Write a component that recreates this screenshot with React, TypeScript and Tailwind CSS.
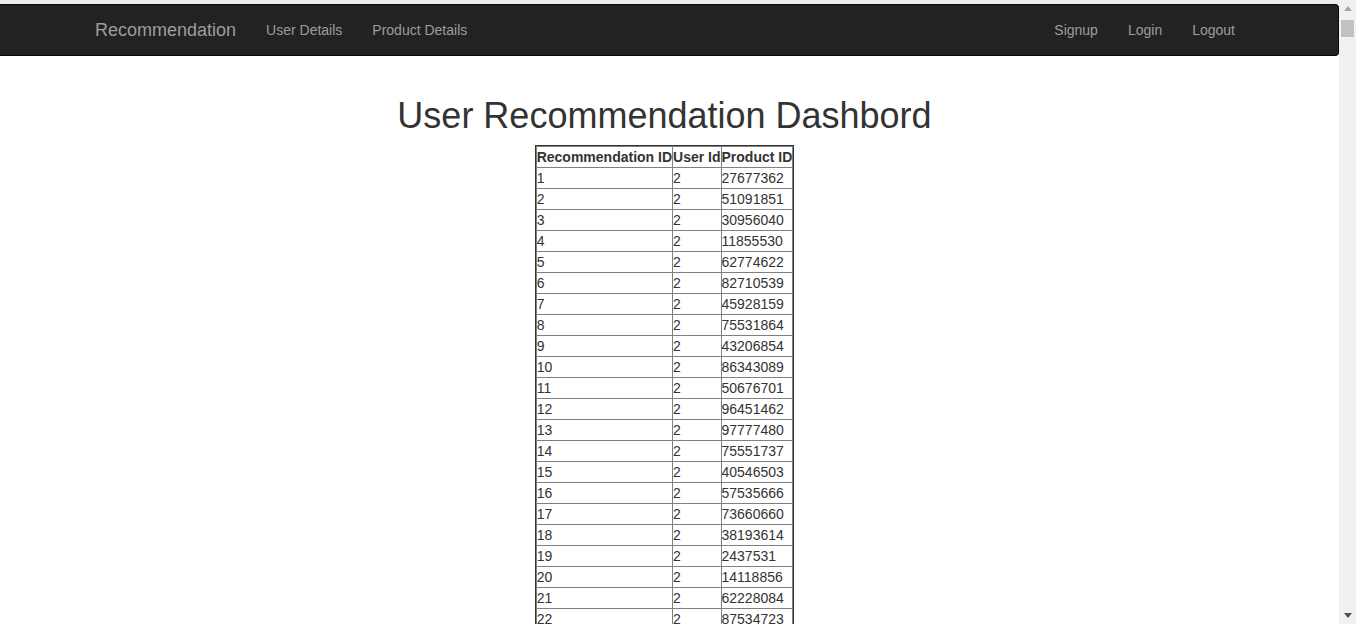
const recommendations = [
  { id: 1, userId: 2, productId: 27677362 },
  { id: 2, userId: 2, productId: 51091851 },
  { id: 3, userId: 2, productId: 30956040 },
  { id: 4, userId: 2, productId: 11855530 },
  { id: 5, userId: 2, productId: 62774622 },
  { id: 6, userId: 2, productId: 82710539 },
  { id: 7, userId: 2, productId: 45928159 },
  { id: 8, userId: 2, productId: 75531864 },
  { id: 9, userId: 2, productId: 43206854 },
  { id: 10, userId: 2, productId: 86343089 },
  { id: 11, userId: 2, productId: 50676701 },
  { id: 12, userId: 2, productId: 96451462 },
  { id: 13, userId: 2, productId: 97777480 },
  { id: 14, userId: 2, productId: 75551737 },
  { id: 15, userId: 2, productId: 40546503 },
  { id: 16, userId: 2, productId: 57535666 },
  { id: 17, userId: 2, productId: 73660660 },
  { id: 18, userId: 2, productId: 38193614 },
  { id: 19, userId: 2, productId: 2437531 },
  { id: 20, userId: 2, productId: 14118856 },
  { id: 21, userId: 2, productId: 62228084 },
  { id: 22, userId: 2, productId: 87534723 },
];

const leftLinks = ['User Details', 'Product Details'];
const rightLinks = ['Signup', 'Login', 'Logout'];

const Scrollbar = () => (
  <div className="w-[17px] h-[624px] bg-[#f1f1f1] flex flex-col items-center shrink-0">
    <div className="h-[17px] w-full flex items-center justify-center shrink-0">
      <svg width="8" height="5" viewBox="0 0 8 5">
        <polygon points="4,0 8,5 0,5" fill="#a3a3a3" />
      </svg>
    </div>
    <div className="mt-[3px] w-[13px] h-[17px] bg-[#c1c1c1] shrink-0" />
    <div className="flex-1" />
    <div className="h-[17px] w-full flex items-center justify-center shrink-0">
      <svg width="8" height="5" viewBox="0 0 8 5">
        <polygon points="0,0 8,0 4,5" fill="#505050" />
      </svg>
    </div>
  </div>
);

export default function App() {
  return (
    <div
      className="flex h-[624px] overflow-hidden bg-white text-[14px] leading-[20px] text-[#333]"
      style={{ fontFamily: '"Liberation Sans", Arial, sans-serif' }}
    >
      <div className="w-[1339px] shrink-0 flex flex-col">
        <div className="h-[4px] bg-[#ececec] shrink-0" />
        <nav className="h-[52px] shrink-0 bg-[#222] border border-[#080808] border-l-0 rounded-r-[4px] mb-[20px]">
          <div className="ml-[80px] w-[1170px] flex justify-between">
            <div className="flex">
              <a className="pl-[15px] pr-[15px] py-[15px] text-[18px] leading-[20px] text-[#9d9d9d]">
                Recommendation
              </a>
              {leftLinks.map((l) => (
                <a key={l} className="px-[15px] py-[15px] text-[#9d9d9d]">
                  {l}
                </a>
              ))}
            </div>
            <div className="flex">
              {rightLinks.map((l) => (
                <a key={l} className="px-[15px] py-[15px] text-[#9d9d9d]">
                  {l}
                </a>
              ))}
            </div>
          </div>
        </nav>

        <div className="w-[1329px] text-center shrink-0">
          <h1 className="mt-[20px] mb-[9px] text-[36px] leading-[1.1] font-normal text-[#333]">
            User Recommendation Dashbord
          </h1>
          <div className="mx-auto w-fit border border-[#333]">
            <table className="border-collapse text-left">
              <thead>
                <tr>
                  <th className="border border-[#808080] p-0 font-bold">Recommendation ID</th>
                  <th className="border border-[#808080] p-0 font-bold">User Id</th>
                  <th className="border border-[#808080] p-0 font-bold">Product ID</th>
                </tr>
              </thead>
              <tbody>
                {recommendations.map((r) => (
                  <tr key={r.id}>
                    <td className="border border-[#808080] p-0">{r.id}</td>
                    <td className="border border-[#808080] p-0">{r.userId}</td>
                    <td className="border border-[#808080] p-0">{r.productId}</td>
                  </tr>
                ))}
              </tbody>
            </table>
          </div>
        </div>
      </div>
      <Scrollbar />
    </div>
  );
}
